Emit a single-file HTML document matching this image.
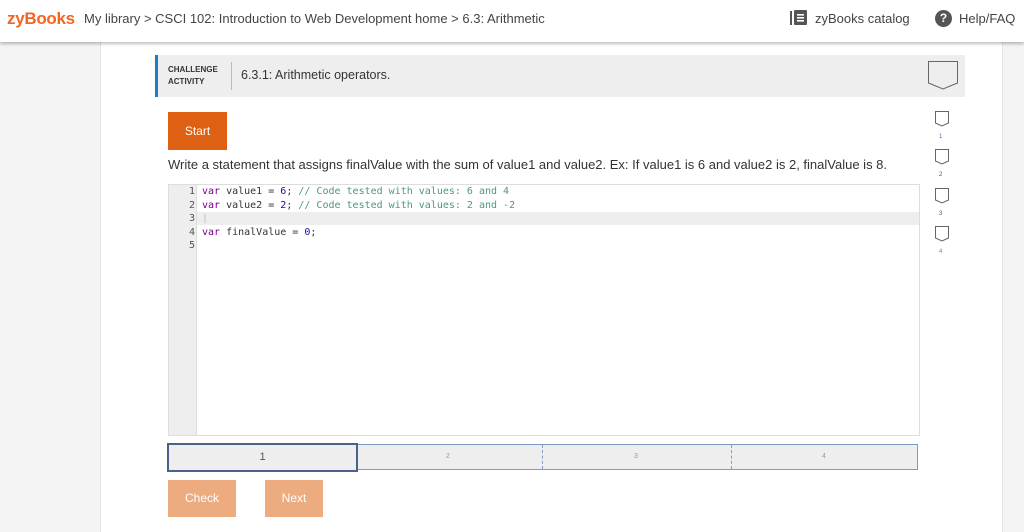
<!DOCTYPE html>
<html><head><style>
*{margin:0;padding:0;box-sizing:border-box}
body{width:1024px;height:532px;overflow:hidden;background:#f4f4f4;font-family:"Liberation Sans",sans-serif;position:relative}
.top{position:absolute;left:0;top:0;width:1024px;height:42px;background:#fff;box-shadow:0 2px 3px rgba(0,0,0,.25);z-index:2}
.abs{position:absolute}
.panel{position:absolute;left:100px;top:42px;width:903px;height:490px;background:#fff;border-left:1px solid #e4e4e4;border-right:1px solid #e4e4e4}
.code{font-family:"DejaVu Sans Mono",monospace;font-size:10px;line-height:13.5px;color:#333}
.kw{color:#708}.num{color:#11a}.cm{color:#4a9a7a}
</style></head><body>
<div class="top">
 <div class="abs" style="left:7px;top:9px;font-size:17px;font-weight:bold;color:#f26522;letter-spacing:-0.3px">zyBooks</div>
 <div class="abs" style="left:84px;top:11px;font-size:13px;color:#444">My library &gt; CSCI 102: Introduction to Web Development home &gt; 6.3: Arithmetic</div>
 <svg class="abs" style="left:790px;top:10px" width="18" height="16" viewBox="0 0 18 16"><rect x="0" y="1" width="2" height="14" fill="#555"/><rect x="4" y="0" width="13" height="15" rx="1" fill="#555"/><rect x="7" y="4" width="7" height="1.6" fill="#fff"/><rect x="7" y="7" width="7" height="1.6" fill="#fff"/><rect x="7" y="10" width="7" height="1.6" fill="#fff"/></svg>
 <div class="abs" style="left:815px;top:11px;font-size:13px;color:#444">zyBooks catalog</div>
 <div class="abs" style="left:935px;top:10px;width:17px;height:17px;border-radius:50%;background:#555;color:#fff;font-size:12px;font-weight:bold;text-align:center;line-height:17px">?</div>
 <div class="abs" style="left:959px;top:11px;font-size:13px;color:#444">Help/FAQ</div>
</div>
<div class="panel"></div>
<div class="abs" style="left:155px;top:55px;width:810px;height:42px;background:#eee;border-left:3px solid #1c7fc6"></div>
<div class="abs" style="left:168px;top:64px;font-size:8px;font-weight:bold;color:#333;line-height:12px">CHALLENGE<br>ACTIVITY</div>
<div class="abs" style="left:231px;top:62px;width:1px;height:28px;background:#bbb"></div>
<div class="abs" style="left:241px;top:68px;font-size:12.5px;color:#333">6.3.1: Arithmetic operators.</div>
<svg class="abs" style="left:927px;top:60px" width="32" height="32"><path d="M1.5 1.5 H30.5 V23 L16 29 L1.5 23 Z" fill="none" stroke="#666"/></svg>
<svg class="abs" style="left:934px;top:110px" width="16" height="20"><path d="M1.5 1.5 H14.5 V13 L8 16 L1.5 13 Z" fill="none" stroke="#666"/></svg>
<div class="abs" style="left:939px;top:134px;font-size:6px;color:#4a6fb0">1</div>
<svg class="abs" style="left:934px;top:148px" width="16" height="20"><path d="M1.5 1.5 H14.5 V13 L8 16 L1.5 13 Z" fill="none" stroke="#666"/></svg>
<div class="abs" style="left:939px;top:172px;font-size:6px;color:#555">2</div>
<svg class="abs" style="left:934px;top:187px" width="16" height="20"><path d="M1.5 1.5 H14.5 V13 L8 16 L1.5 13 Z" fill="none" stroke="#666"/></svg>
<div class="abs" style="left:939px;top:211px;font-size:6px;color:#555">3</div>
<svg class="abs" style="left:934px;top:225px" width="16" height="20"><path d="M1.5 1.5 H14.5 V13 L8 16 L1.5 13 Z" fill="none" stroke="#666"/></svg>
<div class="abs" style="left:939px;top:249px;font-size:6px;color:#d2691e">4</div>
<div class="abs" style="left:168px;top:112px;width:59px;height:38px;background:#de6012;color:#fff;font-size:12px;text-align:center;line-height:38px">Start</div>
<div class="abs" style="left:168px;top:157px;font-size:13px;color:#333;white-space:nowrap">Write a statement that assigns finalValue with the sum of value1 and value2. Ex: If value1 is 6 and value2 is 2, finalValue is 8.</div>
<div class="abs" style="left:168px;top:184px;width:752px;height:252px;border:1px solid #ddd;background:#fff"></div>
<div class="abs" style="left:169px;top:185px;width:28px;height:250px;background:#eee;border-right:1px solid #ddd"></div>
<div class="abs" style="left:197px;top:212px;width:722px;height:13px;background:#eee"></div>
<div class="abs code" style="left:169px;top:185px;width:26px;text-align:right;color:#555">1<br>2<br>3<br>4<br>5</div>
<div class="abs code" style="left:202px;top:185px;white-space:pre"><span class="kw">var</span> value1 = <span class="num">6</span>; <span class="cm">// Code tested with values: 6 and 4</span>
<span class="kw">var</span> value2 = <span class="num">2</span>; <span class="cm">// Code tested with values: 2 and -2</span>
<span style="color:#bbb">|</span>
<span class="kw">var</span> finalValue = <span class="num">0</span>;
</div>
<div class="abs" style="left:168px;top:444px;width:750px;height:26px;background:#eee;border:1px solid #7c9cc4"></div>
<div class="abs" style="left:357px;top:445px;width:1px;height:24px;border-left:1px dashed #7c9cc4"></div>
<div class="abs" style="left:542px;top:445px;width:1px;height:24px;border-left:1px dashed #7c9cc4"></div>
<div class="abs" style="left:731px;top:445px;width:1px;height:24px;border-left:1px dashed #7c9cc4"></div>
<div class="abs" style="left:167px;top:443px;width:191px;height:29px;border:2px solid #4a6388;background:#eee;text-align:center;line-height:25px;font-size:11px;color:#555">1</div>
<div class="abs" style="left:446px;top:453px;font-size:7px;color:#999">2</div>
<div class="abs" style="left:634px;top:453px;font-size:7px;color:#999">3</div>
<div class="abs" style="left:822px;top:453px;font-size:7px;color:#999">4</div>
<div class="abs" style="left:168px;top:480px;width:68px;height:37px;background:#edab80;color:#fff;font-size:12px;text-align:center;line-height:37px">Check</div>
<div class="abs" style="left:265px;top:480px;width:58px;height:37px;background:#edab80;color:#fff;font-size:12px;text-align:center;line-height:37px">Next</div>
</body></html>
